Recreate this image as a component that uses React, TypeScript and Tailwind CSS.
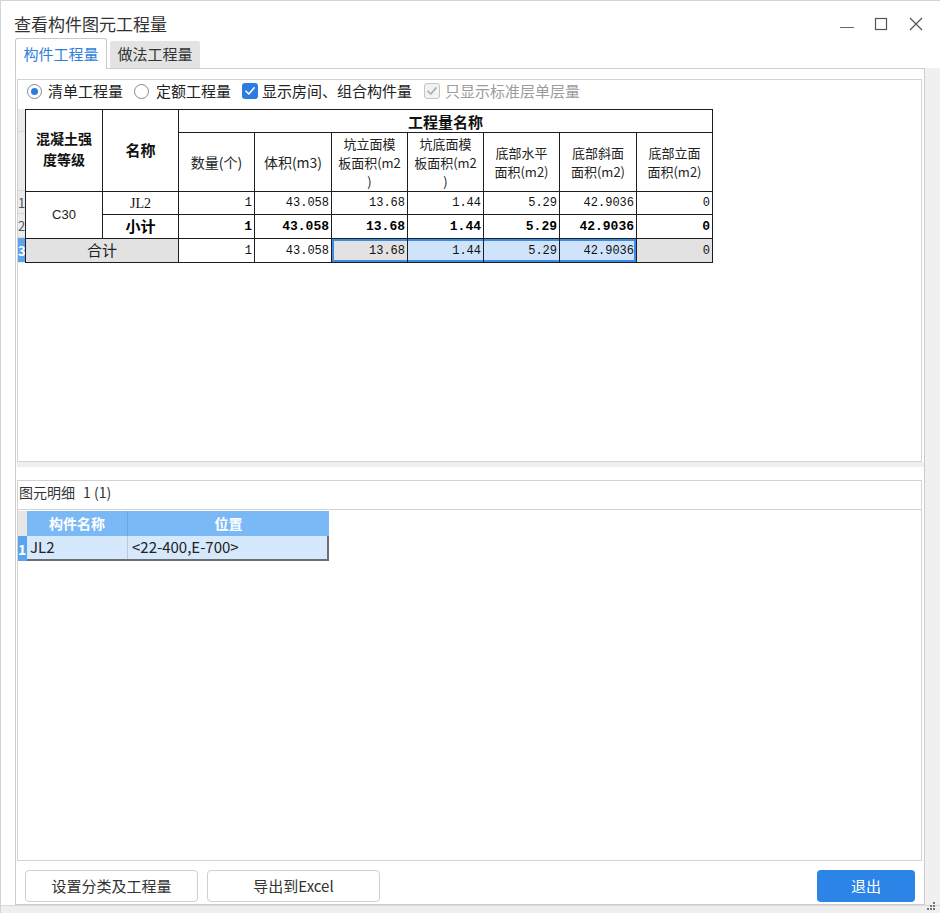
import React from "react";

const num = "font-['Liberation_Mono','DejaVu_Sans_Mono',monospace] text-[12px]";
const cjk = "font-['Noto_Sans_CJK_SC','Noto_Sans',sans-serif]";
const bd = "border border-[#1e1e1e]";

function Check({ color }: { color: string }) {
  return (
    <svg width="12" height="12" viewBox="0 0 12 12" fill="none">
      <path d="M2 6.2 L4.8 9 L10.2 2.8" stroke={color} strokeWidth="1.6" strokeLinecap="round" strokeLinejoin="round" />
    </svg>
  );
}

function Lines({ lines }: { lines: string[] }) {
  return (
    <div className="flex flex-col items-center">
      {lines.map((l, i) => (
        <div key={i} className="h-[19px] leading-[19px] whitespace-nowrap">
          {l}
        </div>
      ))}
    </div>
  );
}

export default function App() {
  const hdr2 = `${bd} text-center align-middle text-[13px] font-normal text-[#222]`;
  const td = `${bd} text-right pr-[2px] ${num} text-[#111]`;
  const tdb = `${bd} text-right pr-[2px] ${num} font-bold text-[13px] text-[#000]`;
  return (
    <div className={`relative w-[940px] h-[913px] bg-white flex flex-col border-l border-t border-[#d4d4d4] overflow-hidden ${cjk} text-[#333]`}>
      {/* title bar */}
      <div className="h-[37px] flex items-center pt-[8px] pl-[13px]">
        <span className="text-[17px] leading-[22px] text-[#333]">查看构件图元工程量</span>
        <div className="ml-auto flex items-center pr-[17px]">
          <svg width="14" height="14" viewBox="0 0 14 14">
            <line x1="0" y1="10.5" x2="14" y2="10.5" stroke="#666" strokeWidth="1" />
          </svg>
          <svg className="ml-[20px]" width="14" height="14" viewBox="0 0 14 14">
            <rect x="1.5" y="1.5" width="11" height="11" fill="none" stroke="#555" strokeWidth="1.2" />
          </svg>
          <svg className="ml-[21px]" width="14" height="14" viewBox="0 0 14 14">
            <path d="M1 1 L13 13 M13 1 L1 13" stroke="#555" strokeWidth="1.2" />
          </svg>
        </div>
      </div>
      {/* tabs */}
      <div className="h-[30px] pl-[14px] flex items-end">
        <div className="relative z-10 -mb-px w-[92px] h-[31px] border border-b-0 border-[#c9c9c9] rounded-t-[3px] bg-white flex items-center justify-center text-[15px] text-[#2d7fd9]">
          构件工程量
        </div>
        <div className="ml-[3px] w-[90px] h-[27px] bg-[#e3e3e3] rounded-t-[2px] flex items-center justify-center text-[15px] text-[#333]">
          做法工程量
        </div>
      </div>
      {/* main */}
      <div className="flex-1 flex flex-col">
        <div className="h-[837px] flex">
          <div className="w-[14px] bg-white" />
          <div className="w-[910px] border border-[#cccccc] flex flex-col pt-[10px] pl-[1px] bg-white">
            {/* top panel */}
            <div className="w-[905px] h-[383px] border border-[#d3d3d3] flex flex-col">
              <div className="h-[22px] flex items-center pl-[9px] text-[15px] text-[#222]">
                <div className="w-[15px] h-[15px] rounded-full border border-[#888] bg-white flex items-center justify-center">
                  <div className="w-[7px] h-[7px] rounded-full bg-[#2a7de1]" />
                </div>
                <span className="ml-[6px]">清单工程量</span>
                <div className="ml-[11px] w-[15px] h-[15px] rounded-full border border-[#888] bg-white" />
                <span className="ml-[7px]">定额工程量</span>
                <div className="ml-[11px] w-[16px] h-[16px] rounded-[3px] bg-[#2b7de1] flex items-center justify-center">
                  <Check color="#ffffff" />
                </div>
                <span className="ml-[4px]">显示房间、组合构件量</span>
                <div className="ml-[12px] w-[16px] h-[16px] rounded-[3px] border border-[#c4c4c4] bg-[#f3f3f3] flex items-center justify-center">
                  <Check color="#aaaaaa" />
                </div>
                <span className="ml-[5px] text-[#9c9c9c]">只显示标准层单层量</span>
              </div>
              <div className="mt-[7px] flex">
                {/* row header strip */}
                <div className="w-[7px] flex flex-col bg-[#ececec] text-[13px] leading-none overflow-hidden">
                  <div className="h-[23px] border-b border-[#d6d6d6]" />
                  <div className="h-[59px] border-b border-[#d6d6d6]" />
                  <div className="h-[23px] border-b border-[#d6d6d6] flex items-center text-[#555]">1</div>
                  <div className="h-[24px] border-b border-[#d6d6d6] flex items-center text-[#555]">2</div>
                  <div className="h-[24px] bg-[#5fa3ee] flex items-center text-white font-bold">3</div>
                </div>
                <table className="table-fixed border-collapse w-[687px]">
                  <colgroup>
                    <col className="w-[77px]" />
                    <col className="w-[76px]" />
                    <col className="w-[76px]" />
                    <col className="w-[77px]" />
                    <col className="w-[76px]" />
                    <col className="w-[76px]" />
                    <col className="w-[76px]" />
                    <col className="w-[77px]" />
                    <col className="w-[76px]" />
                  </colgroup>
                  <tbody>
                    <tr className="h-[23px]">
                      <td rowSpan={2} className={`${bd} text-center align-middle text-[14px] font-bold text-[#111]`}>
                        <div className="flex flex-col items-center -mt-[4px]">
                          <div className="h-[21px] leading-[21px]">混凝土强</div>
                          <div className="h-[21px] leading-[21px]">度等级</div>
                        </div>
                      </td>
                      <td rowSpan={2} className={`${bd} text-center align-middle text-[15px] font-bold text-[#111]`}>名称</td>
                      <td colSpan={7} className={`${bd} text-center align-middle text-[15px] leading-[21px] font-bold text-[#111]`}>工程量名称</td>
                    </tr>
                    <tr className="h-[59px]">
                      <td className={`${hdr2} text-[14px]`}>数量(个)</td>
                      <td className={`${hdr2} text-[14px]`}>体积(m3)</td>
                      <td className={hdr2}><Lines lines={["坑立面模", "板面积(m2", ")"]} /></td>
                      <td className={hdr2}><Lines lines={["坑底面模", "板面积(m2", ")"]} /></td>
                      <td className={hdr2}><Lines lines={["底部水平", "面积(m2)"]} /></td>
                      <td className={hdr2}><Lines lines={["底部斜面", "面积(m2)"]} /></td>
                      <td className={hdr2}><Lines lines={["底部立面", "面积(m2)"]} /></td>
                    </tr>
                    <tr className="h-[23px]">
                      <td rowSpan={2} className={`${bd} text-center align-middle text-[13px] text-[#222] font-['Liberation_Sans',sans-serif]`}>C30</td>
                      <td className={`${bd} text-center text-[14px] font-['Liberation_Serif',serif] text-[#111]`}>JL2</td>
                      <td className={td}>1</td>
                      <td className={td}>43.058</td>
                      <td className={td}>13.68</td>
                      <td className={td}>1.44</td>
                      <td className={td}>5.29</td>
                      <td className={td}>42.9036</td>
                      <td className={td}>0</td>
                    </tr>
                    <tr className="h-[24px]">
                      <td className={`${bd} text-center text-[15px] font-bold text-[#000]`}>小计</td>
                      <td className={tdb}>1</td>
                      <td className={tdb}>43.058</td>
                      <td className={tdb}>13.68</td>
                      <td className={tdb}>1.44</td>
                      <td className={tdb}>5.29</td>
                      <td className={tdb}>42.9036</td>
                      <td className={tdb}>0</td>
                    </tr>
                    <tr className="h-[24px]">
                      <td colSpan={2} className={`${bd} bg-[#e2e2e2] text-center text-[15px] text-[#222]`}>合计</td>
                      <td className={td}>1</td>
                      <td className={td}>43.058</td>
                      <td className={`${td} bg-[#e2e2e2] shadow-[inset_2px_2px_0_#3d8be8,inset_0_-2px_0_#3d8be8]`}>13.68</td>
                      <td className={`${td} bg-[#cfe4fb] shadow-[inset_0_2px_0_#3d8be8,inset_0_-2px_0_#3d8be8]`}>1.44</td>
                      <td className={`${td} bg-[#cfe4fb] shadow-[inset_0_2px_0_#3d8be8,inset_0_-2px_0_#3d8be8]`}>5.29</td>
                      <td className={`${td} bg-[#cfe4fb] shadow-[inset_-2px_2px_0_#3d8be8,inset_0_-2px_0_#3d8be8]`}>42.9036</td>
                      <td className={`${td} bg-[#e2e2e2]`}>0</td>
                    </tr>
                  </tbody>
                </table>
              </div>
            </div>
            {/* splitter */}
            <div className="h-[18px] flex flex-col">
              <div className="h-[5px] bg-[#efefef]" />
            </div>
            {/* bottom panel */}
            <div className="w-[905px] h-[381px] border border-[#d3d3d3] flex flex-col">
              <div className="h-[29px] border-b border-[#d3d3d3] pl-[1px] pt-[1px] text-[14px] leading-[20px] text-[#333]">
                图元明细<span className="ml-[8px]">1 (1)</span>
              </div>
              <div className="pt-[1px] flex">
                <div className="w-[9px] flex flex-col text-[14px] leading-none overflow-hidden">
                  <div className="h-[25px] bg-[#e6e6e6]" />
                  <div className="h-[25px] bg-[#5aa3ef] text-white font-bold flex items-center">1</div>
                </div>
                <div className="flex flex-col">
                  <div className="h-[25px] flex bg-[#7bb9f6] text-white font-bold text-[14px]">
                    <div className="w-[101px] flex items-center justify-center border-r border-[#6aa6e4]">构件名称</div>
                    <div className="w-[201px] flex items-center justify-center">位置</div>
                  </div>
                  <div className="h-[25px] flex bg-[#d5e8fc] text-[15px] text-[#222] border-r-2 border-b-2 border-[#6e6e6e]">
                    <div className="w-[101px] flex items-center pl-[3px] border-r border-[#c2c8d0]">JL2</div>
                    <div className="w-[199px] flex items-center pl-[4px]">&lt;22-400,E-700&gt;</div>
                  </div>
                </div>
              </div>
            </div>
            {/* buttons */}
            <div className="flex items-start pt-[9px] pl-[8px] pr-[9px]">
              <button className="w-[173px] h-[32px] border border-[#d0d0d0] rounded-[4px] bg-white text-[15px] text-[#333]">
                设置分类及工程量
              </button>
              <button className="ml-[9px] w-[173px] h-[32px] border border-[#d0d0d0] rounded-[4px] bg-white text-[15px] text-[#333]">
                导出到Excel
              </button>
              <button className="ml-auto w-[98px] h-[32px] rounded-[4px] bg-[#2b84e6] text-[15px] text-white">
                退出
              </button>
            </div>
          </div>
          <div className="flex-1 bg-[#f0f0f0]" />
        </div>
        <div className="flex-1 bg-[#efefef] border-t border-[#d8d8d8]" />
      </div>
      {/* resize grip */}
      <svg className="absolute right-[4px] bottom-[2px]" width="9" height="9" viewBox="0 0 9 9">
        <rect x="6" y="0" width="2" height="2" fill="#777" />
        <rect x="3" y="3" width="2" height="2" fill="#777" />
        <rect x="6" y="3" width="2" height="2" fill="#777" />
        <rect x="0" y="6" width="2" height="2" fill="#777" />
        <rect x="3" y="6" width="2" height="2" fill="#777" />
        <rect x="6" y="6" width="2" height="2" fill="#777" />
      </svg>
    </div>
  );
}
